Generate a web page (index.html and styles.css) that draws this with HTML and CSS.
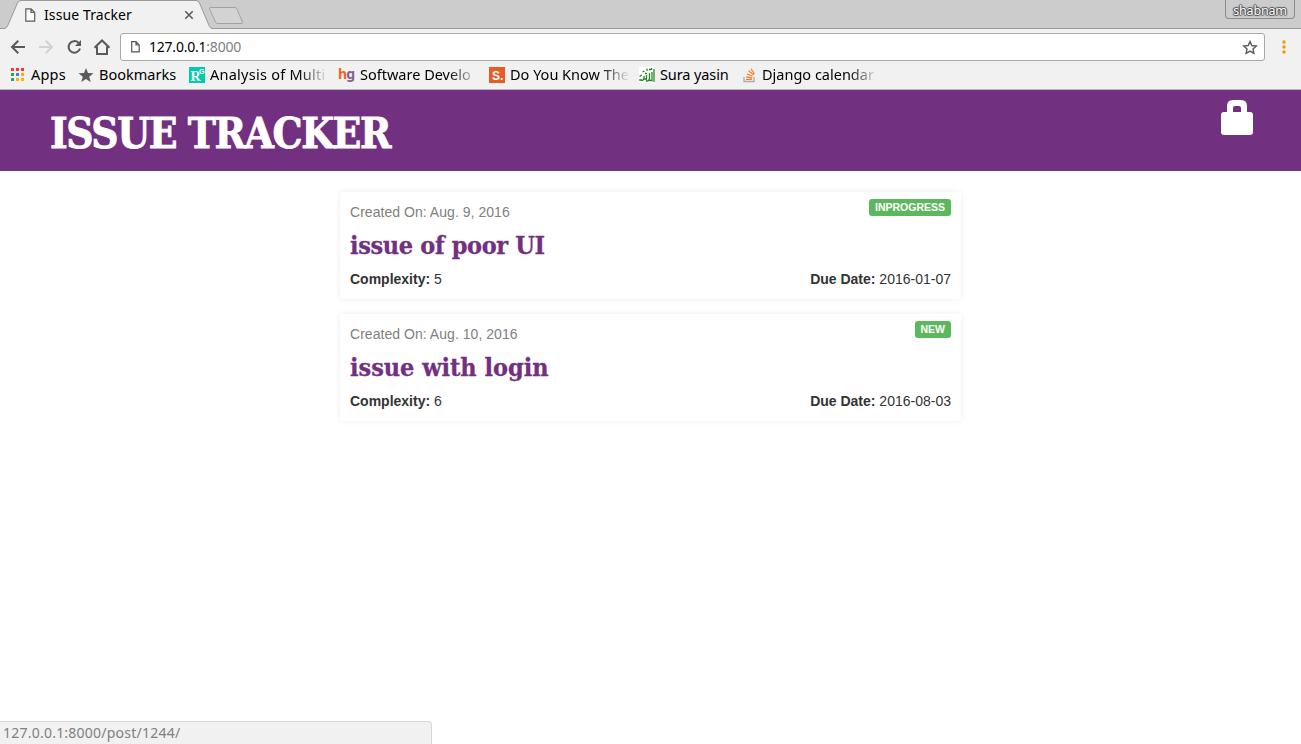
FILE: index.html
```html
<!DOCTYPE html>
<html lang="en">
<head>
<meta charset="utf-8">
<title>Issue Tracker</title>
<link rel="stylesheet" href="styles.css">
</head>
<body>
<div class="browser">
  <div class="tabstrip">
    <svg class="tab-shapes" width="260" height="29" viewBox="0 0 260 29">
      <path d="M0 28.5H4Q6.500 28.500 7.500 26L17.500 3Q18.500.5 21 .5H196Q198.500.5 199.500 3L209 25.500Q210.500 28.500 212 28.500V29H0z" fill="#f1f1f1"/>
      <path d="M0 28.500H4Q6.500 28.500 7.500 26L17.500 3Q18.500.5 21 .5H196Q198.500.5 199.500 3L209 25.500Q210.500 28.500 212 28.500H260" fill="none" stroke="#999"/>
      <path d="M211 7.500H235Q236.500 7.500 237 9L242.500 22Q243 23.500 241 23.500H218Q216 23.500 215.500 22L209.500 9Q209 7.500 211 7.500z" fill="#d3d3d3" stroke="#a2a2a2"/>
    </svg>
    <svg class="tab-icon" width="12" height="14" viewBox="0 0 12 14"><path d="M.8.8H6L9.700 4.500V13.200H.8zM6 .8V4.500H9.700" fill="#fafafa" stroke="#5c5c5c" stroke-width="1.200"/></svg>
    <span class="tab-title">Issue Tracker</span>
    <svg class="tab-close" width="10" height="10" viewBox="0 0 10 10"><path d="M1.300 1.300L8.700 8.700M8.700 1.300L1.300 8.700" stroke="#5c5c5c" stroke-width="1.600"/></svg>
    <span class="profile">shabnam</span>
  </div>
  <div class="toolbar">
    <svg class="nav" width="110" height="20" viewBox="0 0 110 20" fill="none" stroke="#5a5a5a" stroke-width="2">
      <path d="M15 10H2M8.300 3.700L2 10L8.300 16.300"/>
      <path d="M29 10H42M35.700 3.700L42 10L35.700 16.300" stroke="#d2d2d2"/>
      <path d="M68.500 5.800A5.800 5.800 0 1 0 70 11.500"/>
      <path d="M71 3V9H65z" fill="#5a5a5a" stroke="none"/>
      <path d="M84.500 10.700L92 3.500L99.500 10.700M87 9.500V17H97V9.500"/>
    </svg>
    <div class="address">
      <svg width="9" height="12" viewBox="0 0 9 12"><path d="M.7.7H5L8.200 4V10.800H.7zM5 .7V4H8.200" fill="none" stroke="#555" stroke-width="1.200"/></svg>
      <span class="url">127.0.0.1<span class="port">:8000</span></span>
      <svg class="star" width="16" height="15" viewBox="0 0 16 15"><path d="M8 1.500L9.800 5.500L14.300 6L11 9L11.900 13.300L8 11.100L4.100 13.300L5 9L1.700 6L6.200 5.500z" fill="none" stroke="#5a5a5a" stroke-width="1.400"/></svg>
    </div>
    <svg class="menu" width="4" height="14" viewBox="0 0 4 14" fill="#f29900"><circle cx="2" cy="2" r="1.700"/><circle cx="2" cy="7" r="1.700"/><circle cx="2" cy="12" r="1.700"/></svg>
  </div>
  <div class="bookmarks">
    <div class="bookmark apps">
      <svg width="14" height="14" viewBox="0 0 14 14"><path d="M0 0h3v3H0zM5 0h3v3H5zM10 0h3v3h-3z" fill="#ed3b31"/><path d="M0 5h3v3H0zM0 10h3v3H0z" fill="#31a354"/><path d="M5 5h3v3H5z" fill="#3284f0"/><path d="M10 5h3v3h-3zM5 10h3v3H5zM10 10h3v3h-3z" fill="#fbb000"/></svg>
      <span class="label">Apps</span>
    </div>
    <div class="bookmark saved">
      <svg width="16" height="16" viewBox="0 0 16 16"><path d="M8 1L10 6L15.500 6.300L11.200 9.700L12.700 15L8 12L3.300 15L4.800 9.700L.5 6.300L6 6z" fill="#5a5a5a"/></svg>
      <span class="label">Bookmarks</span>
    </div>
    <div class="bookmark analysis">
      <svg width="16" height="16" viewBox="0 0 16 16"><path d="M0 0H16V16H0z" fill="#00ccaa"/><text class="rg-r" x="1.500" y="14">R</text><text class="rg-g" x="10" y="7">G</text></svg>
      <span class="label faded">Analysis of Multi</span>
    </div>
    <div class="bookmark software">
      <span class="hg"><span class="hg-h">h</span>g</span>
      <span class="label faded">Software Develo</span>
    </div>
    <div class="bookmark know">
      <svg width="16" height="16" viewBox="0 0 16 16"><path d="M0 0H16V16H0z" fill="#e75b27"/><text class="s-mark" x="3" y="13">S.</text></svg>
      <span class="label faded">Do You Know The</span>
    </div>
    <div class="bookmark sura">
      <svg width="16" height="16" viewBox="0 0 16 16"><path d="M0 0H16V16H0z" fill="#fff"/><path d="M15 2V15M13 5V13.500H10.500V6M10.500 11Q10 14.500 7.500 14V8M7.500 12H5V9M5 11Q4 15 2 12.500M.5 9.500L3 8M3.500 5L5.500 4M8 1.500V4M10 2.500H12M6 6.500H8M12.500 1V3M1 12V14" fill="none" stroke="#258a25" stroke-width="1.300"/></svg>
      <span class="label">Sura yasin</span>
    </div>
    <div class="bookmark django">
      <svg width="14" height="16" viewBox="0 0 14 16" fill="none"><path d="M1 10V14.500H11V10" stroke="#aaa" stroke-width="1.300"/><path d="M3 12.300H9M3 9.800L9.200 10.800M3.800 7L9.700 9.300M5.500 3.800L10.700 7.800M8 1.800L11.500 7" stroke="#f48024" stroke-width="1.200"/></svg>
      <span class="label faded">Django calendar</span>
    </div>
  </div>
</div>
<header class="page-header">
  <h1 class="brand">ISSUE TRACKER</h1>
  <svg class="lock" width="34" height="36" viewBox="0 0 34 36"><path fill-rule="evenodd" d="M7 12V6Q7 0 13 0H21Q27 0 27 6V12H30Q33 12 33 15V32Q33 35 30 35H4Q1 35 1 32V15Q1 12 4 12zM13 12H21V8Q21 6 19 6H15Q13 6 13 8z" fill="#fff"/></svg>
</header>
<main class="issues">
  <article class="issue">
    <div class="issue-top"><span class="created">Created On: Aug. 9, 2016</span><span class="status">INPROGRESS</span></div>
    <h2 class="issue-title poor">issue of poor UI</h2>
    <div class="issue-meta"><span><b>Complexity:</b> 5</span><span><b>Due Date:</b> 2016-01-07</span></div>
  </article>
  <article class="issue">
    <div class="issue-top"><span class="created">Created On: Aug. 10, 2016</span><span class="status">NEW</span></div>
    <h2 class="issue-title login">issue with login</h2>
    <div class="issue-meta"><span><b>Complexity:</b> 6</span><span><b>Due Date:</b> 2016-08-03</span></div>
  </article>
</main>
<div class="link-status">127.0.0.1:8000/post/1244/</div>
</body>
</html>
```
FILE: styles.css
```css
* { box-sizing: border-box; }
body {
  margin: 0;
  height: 744px;
  overflow: hidden;
  background: #fff;
  color: #333;
  font: 14px/20px "Liberation Sans", Arial, sans-serif;
}
svg { display: block; flex: none; }
.browser {
  height: 90px;
  background: #f1f1f1;
  border-bottom: 1px solid #b8b5b8;
  color: #000;
  font-family: "Noto Sans", "Open Sans", sans-serif;
}
.tabstrip {
  position: relative;
  display: flex;
  height: 29px;
  padding-left: 25px;
  background: #ccc;
  border-bottom: 1px solid #999;
}
.tab-shapes { position: absolute; left: 0; top: 0; }
.tab-icon, .tab-title, .tab-close { position: relative; }
.tab-icon { margin-top: 8px; }
.tab-title { width: 140px; margin: 5px 0 0 7px; font-size: 14px; letter-spacing: 0.1px; }
.tab-close { margin-top: 10px; }
.profile {
  width: 70px;
  height: 19px;
  margin: 0 6px 0 auto;
  border: 1px solid #8b8b8b;
  border-top: 0;
  border-radius: 0 0 4px 4px;
  color: #fff;
  font-size: 12.500px;
  letter-spacing: -0.2px;
  line-height: 22px;
  text-align: center;
  text-shadow: 1px 0 1px #444, -1px 0 1px #444, 0 1px 1px #444, 0 -1px 1px #444;
}
.toolbar { display: flex; align-items: center; height: 36px; padding-left: 10px; }
.address {
  display: flex;
  align-items: center;
  width: 1145px;
  height: 28px;
  padding: 0 6px 0 10px;
  background: #fff;
  border: 1px solid #a9a9a9;
  border-radius: 3px;
}
.url { margin-left: 9px; font-size: 14px; letter-spacing: -0.22px; }
.port { color: #808080; }
.star { margin-left: auto; }
.menu { margin-left: 17px; }
.bookmarks { display: flex; height: 24px; padding-left: 11px; }
.bookmark { display: flex; align-items: center; height: 20px; flex: none; }
.label { height: 24px; margin-left: 5px; font-size: 14.5px; white-space: nowrap; line-height: 22px; }
.faded { -webkit-mask-image: linear-gradient(to right, #000 75%, transparent); mask-image: linear-gradient(to right, #000 75%, transparent); }
.apps { width: 67px; }
.apps .label { margin-left: 6px; letter-spacing: 0.2px; }
.saved { width: 111px; }
.analysis { width: 149px; }
.analysis .label { width: 118px; letter-spacing: 0.25px; }
.software { width: 151px; }
.software .label { width: 118px; }
.know { width: 150px; }
.know .label { width: 120px; }
.sura { width: 104px; }
.sura .label { letter-spacing: -0.1px; }
.django .label { width: 116px; }
.rg-r { font: bold 14px "Liberation Serif", serif; fill: #fff; }
.rg-g { font: bold 7px "Liberation Sans", sans-serif; fill: #fff; }
.s-mark { font: bold 12px "Liberation Sans Narrow", "Liberation Sans", sans-serif; fill: #fff; }
.hg { width: 17px; height: 20px; color: #84618f; font: bold 14px/18px "Noto Sans", sans-serif; letter-spacing: -0.8px; }
.hg-h { color: #f26322; }
.page-header {
  display: flex;
  justify-content: space-between;
  height: 81px;
  padding: 10px 47px 0 50px;
  background: #723081;
}
.brand {
  margin: 4px 0 0;
  color: #fff;
  font: bold 42px/60px "DejaVu Serif Condensed", "DejaVu Serif", serif;
  font-stretch: condensed;
  letter-spacing: -1.4px;
  white-space: nowrap;
  -webkit-text-stroke: 0.8px #fff;
}
.issues { display: flex; flex-direction: column; gap: 15px; width: 621px; margin: 21px 0 0 340px; }
.issue { height: 107px; padding: 7px 10px 0; border-radius: 2px; box-shadow: 0 0 6px rgba(0, 0, 0, 0.08); }
.issue-top, .issue-meta { display: flex; justify-content: space-between; align-items: flex-start; }
.created { padding-top: 3px; color: #808080; letter-spacing: 0.04px; }
.status {
  height: 17px;
  padding: 0 6px;
  border-radius: 3px;
  background: #5cb85c;
  color: #fff;
  font-size: 10.5px;
  font-weight: bold;
  line-height: 17px;
}
.issue-title {
  height: 47px;
  margin: 0;
  color: #723081;
  font: bold 25px/48px "DejaVu Serif Condensed", "DejaVu Serif", serif;
  font-stretch: condensed;
  -webkit-text-stroke: 0.3px #723081;
}
.poor { letter-spacing: -0.35px; }
.login { letter-spacing: -0.03px; }
.link-status {
  position: absolute;
  left: 0;
  bottom: 0;
  width: 432px;
  height: 23px;
  padding-left: 3px;
  background: #f1f1f1;
  border: solid #d8d8d8;
  border-width: 1px 1px 0 0;
  border-radius: 0 4px 0 0;
  color: #808080;
  font: 14px/22px "Noto Sans", "Open Sans", sans-serif;
  letter-spacing: 0.23px;
}
```
